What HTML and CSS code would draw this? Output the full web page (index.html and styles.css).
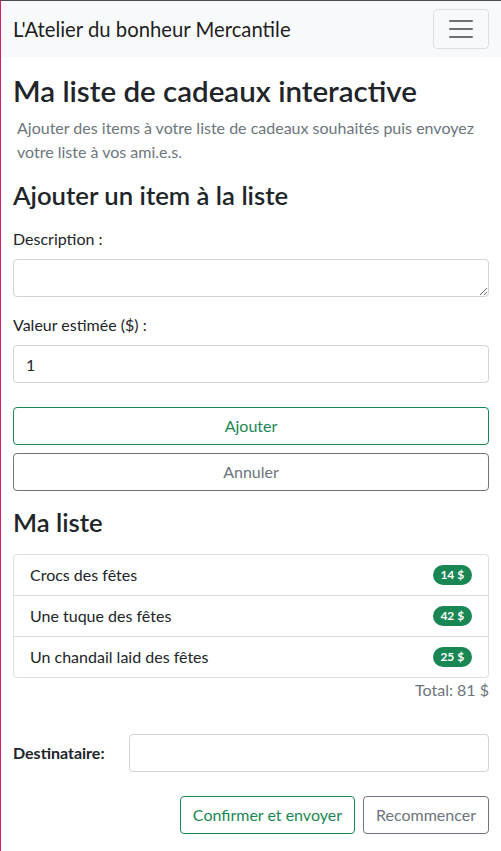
FILE: index.html
```html
<!DOCTYPE html>
<html lang="fr">
<head>
<meta charset="utf-8">
<title>Ma liste de cadeaux interactive</title>
<link rel="stylesheet" href="styles.css">
</head>
<body>
<nav class="navbar">
  <div class="nav-inner">
    <span class="brand">L'Atelier du bonheur Mercantile</span>
    <button class="toggler" type="button" aria-label="Menu">
      <svg class="toggler-icon" viewBox="0 0 30 30" width="30" height="30" aria-hidden="true">
        <path d="M4 7h22M4 15h22M4 23h22" stroke="rgba(0,0,0,0.55)" stroke-width="2" stroke-linecap="round" stroke-miterlimit="10" fill="none"/>
      </svg>
    </button>
  </div>
</nav>
<main class="container">
  <h1 class="title">Ma liste de cadeaux interactive</h1>
  <p class="intro">Ajouter des items à votre liste de cadeaux souhaités puis envoyez votre liste à vos ami.e.s.</p>

  <h2 class="section-title">Ajouter un item à la liste</h2>
  <form class="item-form">
    <div class="field">
      <label class="field-label" for="desc">Description :</label>
      <textarea class="control control-area" id="desc" rows="1"></textarea>
    </div>
    <div class="field">
      <label class="field-label" for="val">Valeur estimée ($) :</label>
      <input class="control" id="val" type="text" value="1">
    </div>
    <div class="stack-actions">
      <button class="btn btn-success" type="button">Ajouter</button>
      <button class="btn btn-secondary" type="button">Annuler</button>
    </div>
  </form>

  <h2 class="section-title">Ma liste</h2>
  <ul class="gift-list">
    <li class="gift-item"><span>Crocs des fêtes</span><span class="badge">14 $</span></li>
    <li class="gift-item"><span>Une tuque des fêtes</span><span class="badge">42 $</span></li>
    <li class="gift-item"><span>Un chandail laid des fêtes</span><span class="badge">25 $</span></li>
  </ul>
  <div class="total">Total: 81 $</div>

  <div class="recipient-row">
    <label class="recipient-label" for="dest">Destinataire:</label>
    <input class="control recipient-input" id="dest" type="text">
  </div>
  <div class="final-actions">
    <button class="btn btn-success" type="button">Confirmer et envoyer</button>
    <button class="btn btn-secondary" type="button">Recommencer</button>
  </div>
</main>
</body>
</html>
```

FILE: styles.css
```css
* { box-sizing: border-box; }

html, body { margin: 0; padding: 0; }

body {
  font-family: "Lato", "Noto Sans", sans-serif;
  font-size: 16px;
  line-height: 1.5;
  color: #212529;
  background: #fff;
  border-top: 1px solid #4d4d4d;
  border-left: 1px solid #d4206c;
  min-height: 100vh;
}

.navbar {
  background: #f8f9fa;
  padding: 8px 0;
}

.nav-inner {
  display: flex;
  align-items: center;
  justify-content: space-between;
  padding: 0 12px;
}

.brand {
  font-size: 20.3px;
  line-height: 30px;
  padding: 5px 0;
  color: rgba(0, 0, 0, 0.9);
}

.toggler {
  display: flex;
  align-items: center;
  justify-content: center;
  width: 56px;
  height: 40px;
  padding: 4px 12px;
  background: transparent;
  border: 1px solid rgba(0, 0, 0, 0.1);
  border-radius: 4px;
}

.toggler-icon { display: block; }

.container {
  padding: 16px 12px 0;
}

.title {
  font-size: 29.5px;
  font-weight: 600;
  line-height: 1.2;
  margin: 0 0 8px;
}

.intro {
  margin: 0 0 16px;
  padding-left: 4px;
  color: #6c757d;
}

.section-title {
  font-size: 25.7px;
  font-weight: 600;
  line-height: 1.2;
  margin: 0 0 16px;
}

.item-form {
  margin: 2px 0 16px;
}

.field { margin-bottom: 16px; }

.field-label {
  display: block;
  margin-bottom: 8px;
}

.control {
  display: block;
  width: 100%;
  height: 38px;
  padding: 6px 12px;
  font: inherit;
  line-height: 1.5;
  color: #212529;
  background: #fff;
  border: 1px solid #ced4da;
  border-radius: 4px;
}

.control-area {
  min-height: 38px;
  resize: vertical;
}

.stack-actions {
  display: grid;
  gap: 8px;
  margin-top: 24px;
}

.btn {
  font: inherit;
  line-height: 1.5;
  padding: 6px 12px;
  background: transparent;
  border: 1px solid;
  border-radius: 4px;
  text-align: center;
}

.btn-success { color: #198754; border-color: #198754; }
.btn-secondary { color: #6c757d; border-color: #6c757d; }

.gift-list {
  list-style: none;
  margin: 0;
  padding: 0;
  border: 1px solid rgba(0, 0, 0, 0.125);
  border-radius: 4px;
}

.gift-item {
  display: flex;
  align-items: center;
  justify-content: space-between;
  padding: 8px 16px;
}

.gift-item + .gift-item {
  border-top: 1px solid rgba(0, 0, 0, 0.125);
}

.badge {
  display: inline-block;
  font-size: 12px;
  font-weight: 700;
  line-height: 1;
  padding: 4.2px 7.8px;
  color: #fff;
  background: #198754;
  border-radius: 50rem;
}

.total {
  text-align: right;
  color: #6c757d;
}

.recipient-row {
  display: flex;
  align-items: flex-start;
  gap: 24px;
  margin-top: 32px;
}

.recipient-label {
  font-weight: 700;
  padding: 7px 0;
  white-space: nowrap;
}

.recipient-input { flex: 1; }

.final-actions {
  display: flex;
  justify-content: flex-end;
  gap: 8px;
  margin-top: 24px;
}
```
